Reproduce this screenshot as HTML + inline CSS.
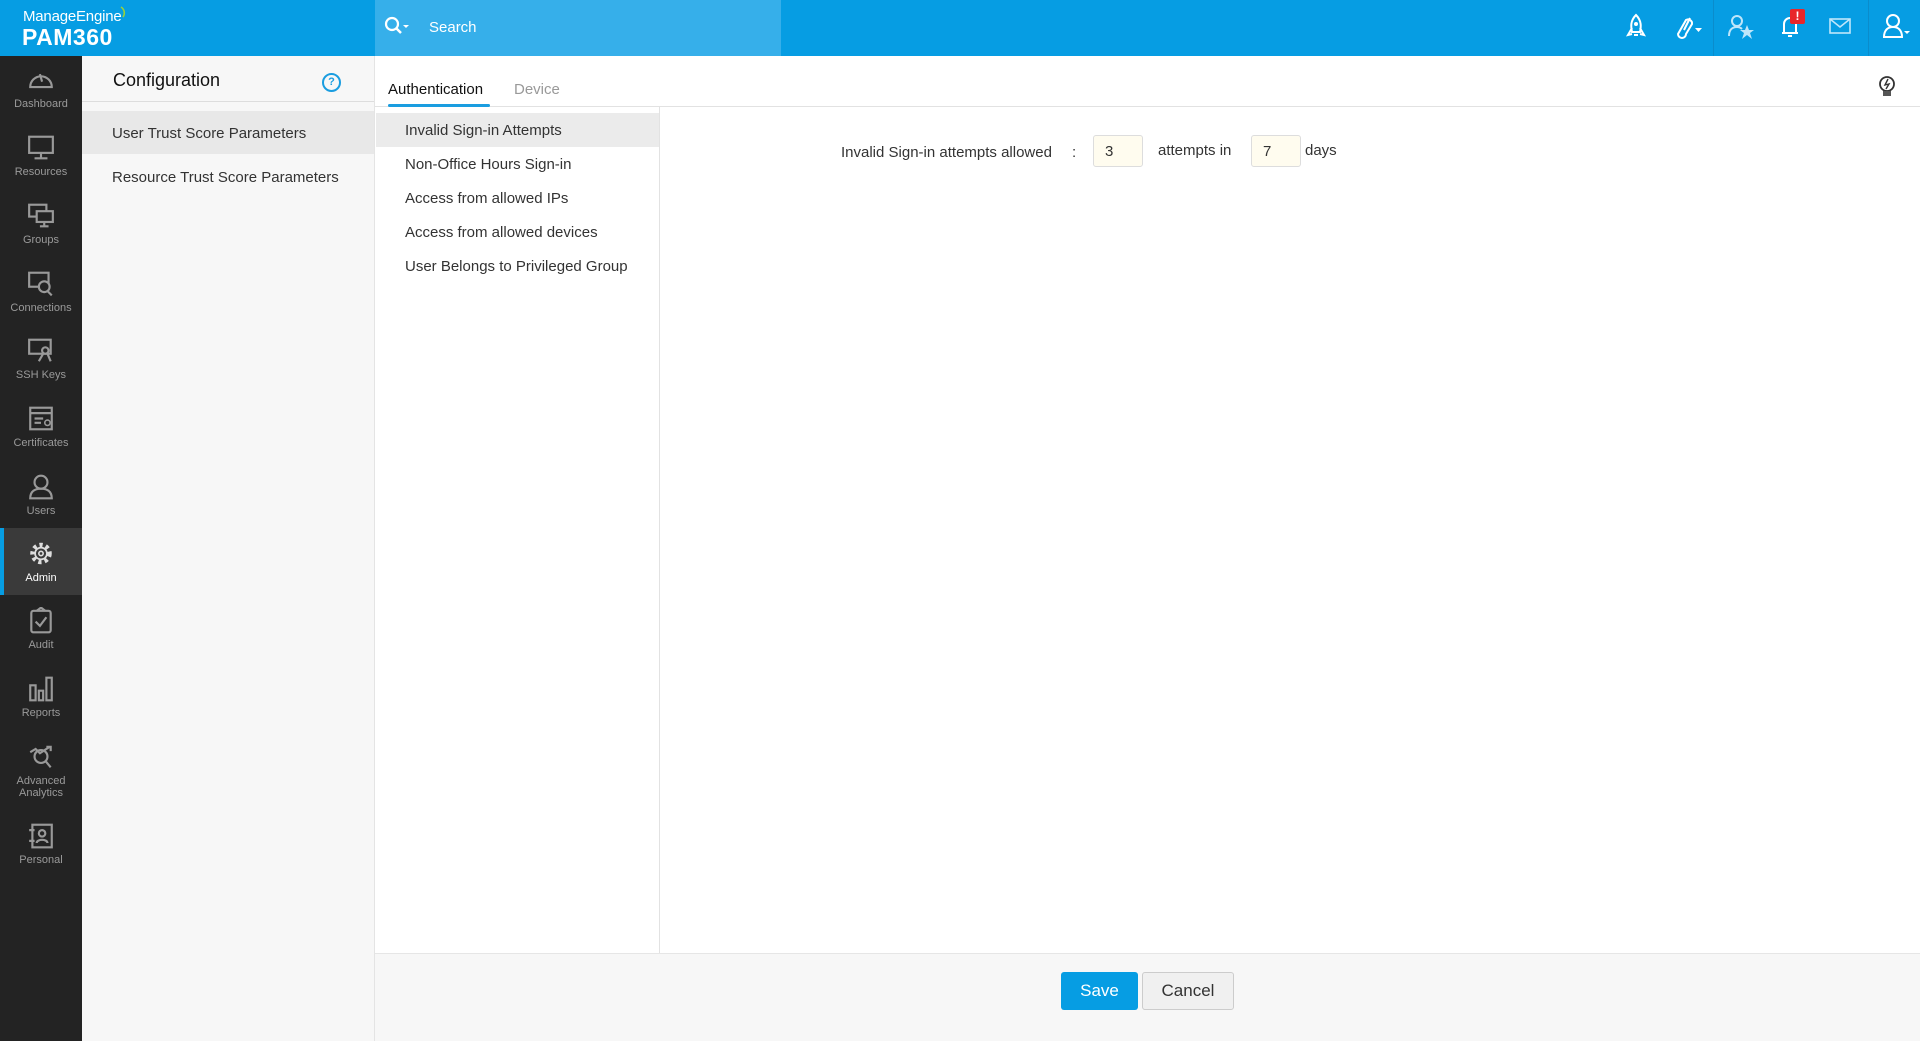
<!DOCTYPE html>
<html><head><meta charset="utf-8"><style>
*{box-sizing:border-box;margin:0;padding:0}
body{width:1920px;height:1041px;overflow:hidden;font-family:"Liberation Sans",Arial,sans-serif;background:#fff;position:relative;color:#222}
.abs{position:absolute}
#hdr{left:0;top:0;width:1920px;height:56px;background:#069de3}
#search{left:375px;top:0;width:406px;height:56px;background:#36afea}
#side{left:0;top:56px;width:82px;height:985px;background:#232323}
.si{position:absolute;left:0;width:82px;text-align:center;color:#9a9a9a;font-size:11px;line-height:12px}
.si svg{display:block;margin:0 auto 5px;width:28px;height:27px}
#cfg{left:82px;top:56px;width:293px;height:985px;background:#f7f7f7;border-right:1px solid #e4e4e4}
#menu{left:376px;top:107px;width:284px;height:846px;background:#fff;border-right:1px solid #e2e2e2}
.mi{position:absolute;left:29px;font-size:15px;color:#333}
#foot{left:375px;top:953px;width:1545px;height:88px;background:#f7f7f7;border-top:1px solid #e6e6e6}
.inp{position:absolute;top:135px;width:50px;height:32px;background:#fffcef;border:1px solid #ddd;border-radius:3px;font-size:15px;padding:7px 0 0 11px;color:#333}
</style></head><body>
<div id="hdr" class="abs">
 <div class="abs" style="left:23px;top:8px;color:#fff;font-size:15px;letter-spacing:-.2px">ManageEngine</div>
 <svg class="abs" style="left:119px;top:5px" width="12" height="14"><path d="M2 2 A7 7 0 0 1 4 12" stroke="#9ad13a" stroke-width="1.6" fill="none"/></svg>
 <div class="abs" style="left:22px;top:24px;color:#fff;font-size:23px;font-weight:bold;letter-spacing:.5px">PAM360</div>
</div>
<div id="search" class="abs">
 <svg class="abs" style="left:9px;top:16px" width="26" height="22"><circle cx="8" cy="8" r="6" stroke="#fff" stroke-width="2.2" fill="none"/><path d="M12.5 12.5 L17 17" stroke="#fff" stroke-width="2.5"/><path d="M19 9 L25 9 L22 12Z" fill="#fff"/></svg>
 <div class="abs" style="left:54px;top:19px;color:#fff;font-size:15px">Search</div>
</div>
<svg class="abs" style="left:1624px;top:13px" width="24" height="28"><path d="M12 2 C6 8 7 14 8 19 L16 19 C17 14 18 8 12 2Z" stroke="#fff" stroke-width="2" fill="none"/><circle cx="12" cy="11" r="2" fill="#fff"/><path d="M8 15 L4 22 L8 21 M16 15 L20 22 L16 21 M10 22 L14 22" stroke="#fff" stroke-width="2" fill="none"/></svg>
<svg class="abs" style="left:1672px;top:14px" width="34" height="26"><path d="M6 20 L14 6 A4 4 0 0 1 20 10 L14 20 A4 4 0 0 1 6 20Z M12 16 L18 4" stroke="#fff" stroke-width="2" fill="none"/><path d="M23 14 L30 14 L26.5 18Z" fill="#fff"/></svg>
<div class="abs" style="left:1713px;top:0;width:1px;height:56px;background:#0a8ccc"></div>
<svg class="abs" style="left:1727px;top:12px" width="28" height="28"><circle cx="10" cy="9" r="5" stroke="#bfe6fa" stroke-width="2" fill="none"/><path d="M2 24 C2 17 6 15 10 15 C12 15 14 16 15 17" stroke="#bfe6fa" stroke-width="2" fill="none"/><path d="M20 13 L22 18 L27 18 L23 21 L25 27 L20 23 L15 27 L17 21 L13 18 L18 18Z" fill="#bfe6fa"/></svg>
<svg class="abs" style="left:1778px;top:12px" width="24" height="26"><path d="M4 21 L20 21 M6 21 L6 12 A6 6 0 0 1 18 12 L18 21 M10 24 L14 24" stroke="#fff" stroke-width="2" fill="none"/></svg>
<div class="abs" style="left:1790px;top:9px;width:15px;height:15px;background:#e8262a;border-radius:2px;color:#fff;font-size:12px;font-weight:bold;text-align:center;line-height:15px">!</div>
<svg class="abs" style="left:1829px;top:18px" width="22" height="16"><rect x="1" y="1" width="20" height="14" stroke="#bfe6fa" stroke-width="1.6" fill="none"/><path d="M1 1 L11 9 L21 1" stroke="#bfe6fa" stroke-width="1.6" fill="none"/></svg>
<div class="abs" style="left:1868px;top:0;width:1px;height:56px;background:#0a8ccc"></div>
<svg class="abs" style="left:1882px;top:12px" width="30" height="28"><circle cx="11" cy="9" r="6" stroke="#fff" stroke-width="2" fill="none"/><path d="M2 25 C2 18 6 15 11 15 C16 15 20 18 20 25 Z" stroke="#fff" stroke-width="2" fill="none"/><path d="M22 19 L28 19 L25 22Z" fill="#fff"/></svg>

<div id="side" class="abs">
 <div class="si" style="top:10px"><svg viewBox="0 0 26 24"><path d="M3 19 A10 10 0 1 1 23 19 Z" stroke="#999" stroke-width="2" fill="none"/><path d="M12 7 L14 14" stroke="#999" stroke-width="2"/></svg>Dashboard</div>
 <div class="si" style="top:78px"><svg viewBox="0 0 26 24"><rect x="2" y="2" width="22" height="15" stroke="#999" stroke-width="2" fill="none"/><path d="M13 17 L13 21 M7 22 L19 22" stroke="#999" stroke-width="2"/></svg>Resources</div>
 <div class="si" style="top:146px"><svg viewBox="0 0 26 24"><rect x="2" y="2" width="16" height="11" stroke="#999" stroke-width="2" fill="none"/><rect x="9" y="8" width="15" height="10" stroke="#999" stroke-width="2" fill="#232323"/><path d="M16 18 L16 22 M12 22 L20 22" stroke="#999" stroke-width="2"/></svg>Groups</div>
 <div class="si" style="top:214px"><svg viewBox="0 0 26 24"><rect x="2" y="2" width="18" height="13" stroke="#999" stroke-width="2" fill="none"/><circle cx="16" cy="15" r="5" stroke="#999" stroke-width="2" fill="#232323"/><path d="M19 19 L23 23" stroke="#999" stroke-width="2"/></svg>Connections</div>
 <div class="si" style="top:281px"><svg viewBox="0 0 26 24"><rect x="2" y="2" width="20" height="13" stroke="#999" stroke-width="2" fill="none"/><circle cx="17" cy="12" r="3" stroke="#999" stroke-width="2" fill="#232323"/><path d="M15 15 L11 22 M19 15 L22 22" stroke="#999" stroke-width="2"/></svg>SSH Keys</div>
 <div class="si" style="top:349px"><svg viewBox="0 0 26 24"><rect x="3" y="2" width="20" height="20" stroke="#999" stroke-width="2" fill="none"/><path d="M3 7 L23 7 M7 12 L15 12 M7 16 L13 16" stroke="#999" stroke-width="2"/><circle cx="19" cy="16" r="2.5" stroke="#999" stroke-width="1.5" fill="none"/></svg>Certificates</div>
 <div class="si" style="top:417px"><svg viewBox="0 0 26 24"><circle cx="13" cy="8" r="6" stroke="#999" stroke-width="2" fill="none"/><path d="M3 23 C3 16 8 14 13 14 C18 14 23 16 23 23Z" stroke="#999" stroke-width="2" fill="none"/></svg>Users</div>
 <div class="abs" style="left:0;top:472px;width:82px;height:67px;background:#3a3a3a;border-left:4px solid #069de3"></div>
 <div class="si" style="top:484px;color:#fff"><svg viewBox="0 0 26 24"><circle cx="13" cy="12" r="8" stroke="#ddd" stroke-width="4" stroke-dasharray="3 3" fill="none"/><circle cx="13" cy="12" r="5.5" stroke="#ddd" stroke-width="1.6" fill="none"/><circle cx="13" cy="12" r="2" stroke="#ddd" stroke-width="1.5" fill="none"/></svg>Admin</div>
 <div class="si" style="top:551px"><svg viewBox="0 0 26 24"><rect x="4" y="3" width="18" height="20" rx="2" stroke="#999" stroke-width="2" fill="none"/><path d="M9 3 L13 0 L17 3 M8 13 L12 17 L18 9" stroke="#999" stroke-width="2" fill="none"/></svg>Audit</div>
 <div class="si" style="top:619px"><svg viewBox="0 0 26 24"><path d="M3 23 L3 9 L8 9 L8 23 Z M11 23 L11 14 L15 14 L15 23Z M18 23 L18 2 L23 2 L23 23Z" stroke="#999" stroke-width="2" fill="none"/></svg>Reports</div>
 <div class="si" style="top:687px"><svg viewBox="0 0 26 24"><circle cx="13" cy="12" r="6" stroke="#999" stroke-width="2" fill="none"/><path d="M17 16 L22 22 M3 8 L8 5 L12 9 L21 3 M18 3 L22 3 L22 7" stroke="#999" stroke-width="2" fill="none"/></svg>Advanced<br>Analytics</div>
 <div class="si" style="top:766px"><svg viewBox="0 0 26 24"><rect x="5" y="2" width="18" height="21" stroke="#999" stroke-width="2" fill="none"/><circle cx="14" cy="10" r="3" stroke="#999" stroke-width="2" fill="none"/><path d="M9 19 C9 15 19 15 19 19 M2 7 L7 7 M2 17 L7 17" stroke="#999" stroke-width="2" fill="none"/></svg>Personal</div>
</div>

<div id="cfg" class="abs">
 <div class="abs" style="left:0;top:0;width:292px;height:46px;border-bottom:1px solid #ddd"></div>
 <div class="abs" style="left:31px;top:14px;font-size:18px;color:#111">Configuration</div>
 <div class="abs" style="left:240px;top:17px;width:19px;height:19px;border:2px solid #1a9de0;border-radius:50%;color:#1a9de0;font-size:11px;font-weight:bold;text-align:center;line-height:15px">?</div>
 <div class="abs" style="left:0;top:55px;width:292px;height:43px;background:#e8e8e8"></div>
 <div class="abs" style="left:30px;top:69px;font-size:15px;color:#333">User Trust Score Parameters</div>
 <div class="abs" style="left:30px;top:113px;font-size:15px;color:#333">Resource Trust Score Parameters</div>
</div>

<div class="abs" style="left:375px;top:106px;width:1545px;height:1px;background:#e2e2e2"></div>
<div class="abs" style="left:388px;top:81px;font-size:15px;color:#111">Authentication</div>
<div class="abs" style="left:388px;top:104px;width:102px;height:3px;background:#1a9de0;border-radius:2px"></div>
<div class="abs" style="left:514px;top:81px;font-size:15px;color:#999">Device</div>
<svg class="abs" style="left:1877px;top:75px" width="20" height="24"><circle cx="10" cy="9" r="7" stroke="#333" stroke-width="1.8" fill="none"/><path d="M11 4 L8 10 L12 9 L9 14" stroke="#333" stroke-width="1.4" fill="none"/><rect x="6" y="16" width="8" height="5" fill="#555"/></svg>

<div id="menu" class="abs">
 <div class="abs" style="left:0;top:6px;width:283px;height:34px;background:#ebebeb"></div>
 <div class="mi" style="top:15px">Invalid Sign-in Attempts</div>
 <div class="mi" style="top:49px">Non-Office Hours Sign-in</div>
 <div class="mi" style="top:83px">Access from allowed IPs</div>
 <div class="mi" style="top:117px">Access from allowed devices</div>
 <div class="mi" style="top:151px">User Belongs to Privileged Group</div>
</div>

<div class="abs" style="left:841px;top:144px;font-size:15px;color:#333">Invalid Sign-in attempts allowed</div>
<div class="abs" style="left:1072px;top:144px;font-size:15px;color:#333">:</div>
<div class="inp" style="left:1093px">3</div>
<div class="abs" style="left:1158px;top:142px;font-size:15px;color:#333">attempts in</div>
<div class="inp" style="left:1251px">7</div>
<div class="abs" style="left:1305px;top:142px;font-size:15px;color:#333">days</div>

<div id="foot" class="abs">
 <div class="abs" style="left:686px;top:18px;width:77px;height:38px;background:#069de3;border-radius:3px;color:#fff;font-size:17px;text-align:center;line-height:38px">Save</div>
 <div class="abs" style="left:767px;top:18px;width:92px;height:38px;background:#f0f0f0;border:1px solid #ccc;border-radius:3px;color:#333;font-size:17px;text-align:center;line-height:36px">Cancel</div>
</div>
</body></html>
